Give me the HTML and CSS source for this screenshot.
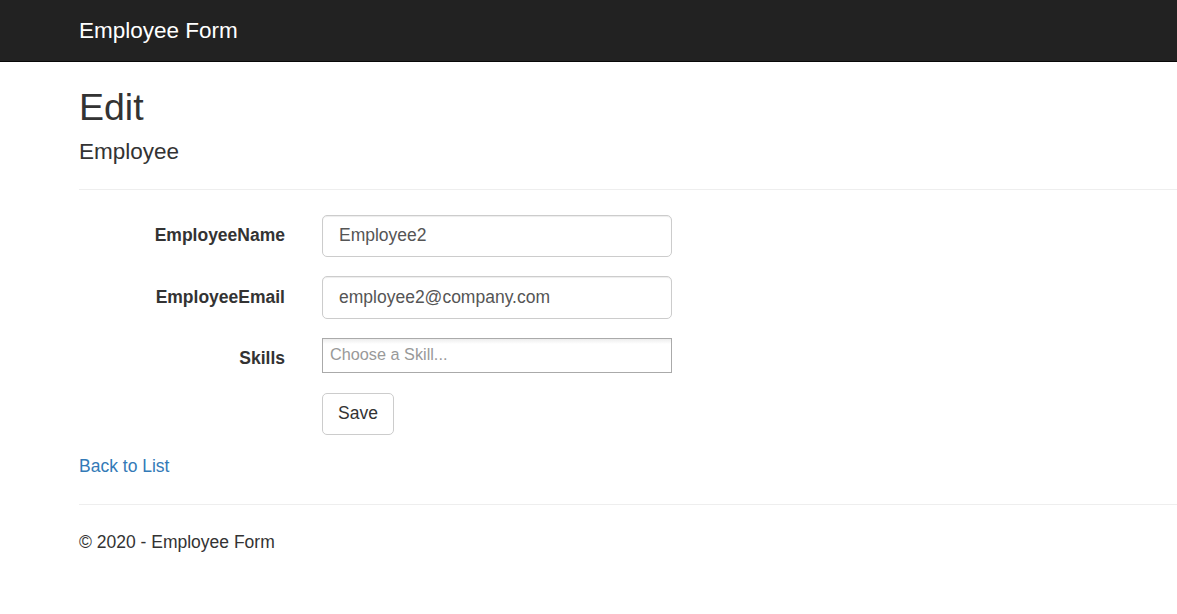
FILE: index.html
```html
<!DOCTYPE html>
<html lang="en">
<head>
<meta charset="utf-8">
<title>Edit - Employee Form</title>
<link rel="stylesheet" href="styles.css">
</head>
<body>
<header class="navbar">
  <a class="brand" href="#">Employee Form</a>
</header>
<main class="page">
  <h2 class="title">Edit</h2>
  <h4 class="subtitle">Employee</h4>
  <hr class="rule">
  <form class="form">
    <div class="form-group">
      <label class="control-label">EmployeeName</label>
      <input class="form-control" type="text" value="Employee2">
    </div>
    <div class="form-group">
      <label class="control-label">EmployeeEmail</label>
      <input class="form-control" type="text" value="employee2@company.com">
    </div>
    <div class="form-group form-group-select">
      <label class="control-label">Skills</label>
      <div class="chosen">
        <span class="chosen-placeholder">Choose a Skill...</span>
      </div>
    </div>
    <div class="form-group">
      <span class="label-spacer"></span>
      <button class="btn" type="button">Save</button>
    </div>
  </form>
  <div class="back"><a class="link" href="#">Back to List</a></div>
  <hr class="rule rule-footer">
  <footer class="footer"><p>© 2020 - Employee Form</p></footer>
</main>
</body>
</html>
```

FILE: styles.css
```css
* { box-sizing: border-box; }
html, body { margin: 0; padding: 0; }
body {
  font-family: "Liberation Sans", Arial, Helvetica, sans-serif;
  font-size: 17.5px;
  line-height: 25px;
  color: #333;
  background: #fff;
  overflow: hidden;
}
.navbar {
  height: 62px;
  background: #222;
  border-bottom: 1px solid #080808;
  padding-left: 79px;
}
.brand {
  display: inline-block;
  color: #fff;
  text-decoration: none;
  font-size: 22.5px;
  line-height: 25px;
  padding-top: 18px;
}
.page {
  padding-left: 79px;
}
.title {
  margin: 25px 0 11.5px;
  font-size: 37.5px;
  line-height: 41.25px;
  font-weight: 500;
}
.subtitle {
  margin: 11.5px 0 12.5px;
  font-size: 22.5px;
  line-height: 24.75px;
  font-weight: 500;
}
.rule {
  margin: 24px 0 25px;
  border: 0;
  border-top: 1px solid #eee;
  height: 0;
}
.rule-footer { margin-top: 25px; }
.form { margin: 0; }
.form-group {
  display: flex;
  align-items: flex-start;
  gap: 37px;
  margin-bottom: 19px;
}
.form-group-select { margin-bottom: 20px; }
.control-label, .label-spacer {
  width: 206px;
  flex: none;
}
.control-label {
  text-align: right;
  font-weight: 700;
  padding-top: 8.75px;
}
.form-control {
  width: 350px;
  height: 42.5px;
  padding: 7.5px 16px;
  font-family: inherit;
  font-size: 17.5px;
  line-height: 25px;
  color: #555;
  background: #fff;
  border: 1px solid #ccc;
  border-radius: 5px;
  box-shadow: inset 0 1px 1px rgba(0,0,0,.075);
  margin: 0;
}
.chosen {
  width: 350px;
  height: 35px;
  margin-top: 0;
  border: 1px solid #aaa;
  background: linear-gradient(#eee 1%, #fff 15%);
  padding: 0 7px;
  display: flex;
  align-items: center;
}
.chosen-placeholder {
  font-size: 16.25px;
  color: #999;
  line-height: 25px;
  margin-top: -1px;
}
.btn {
  height: 42.5px;
  padding: 7.5px 15px;
  font-family: inherit;
  font-size: 17.5px;
  line-height: 25px;
  color: #333;
  background: #fff;
  border: 1px solid #ccc;
  border-radius: 5px;
  margin-top: 0;
}
.back { margin-top: 0; }
.link {
  color: #337ab7;
  text-decoration: none;
}
.footer p { margin: 0; }
```
